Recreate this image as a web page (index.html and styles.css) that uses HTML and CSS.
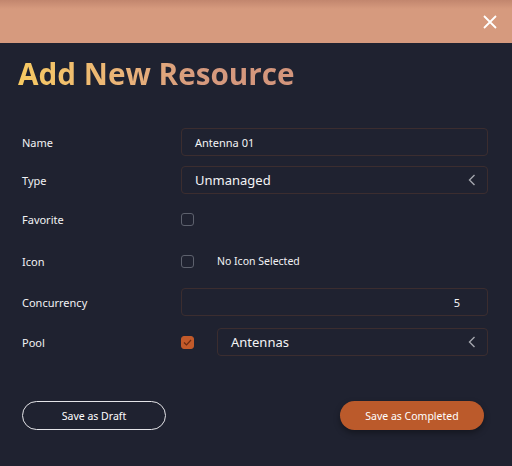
FILE: index.html
```html
<!DOCTYPE html>
<html lang="en">
<head>
  <meta charset="UTF-8" />
  <title>Add New Resource</title>
  <link rel="stylesheet" href="styles.css">
</head>
<body>
  <div class="dialog">
    <div class="dialog-top">
      <button class="close-btn" aria-label="Close">
        <svg width="14" height="14" viewBox="0 0 14 14"><path d="M1 1 L13 13 M13 1 L1 13" stroke="#fff" stroke-width="1.8" fill="none"/></svg>
      </button>
    </div>

    <h1 class="title">Add New Resource</h1>

    <div class="form">
      <div class="row">
        <label>Name</label>
        <div class="field"><span class="value">Antenna 01</span></div>
      </div>

      <div class="row">
        <label>Type</label>
        <div class="field select">
          <span class="value big">Unmanaged</span>
          <svg class="chev" width="8" height="12" viewBox="0 0 8 12"><polyline points="6.5,1 1.5,6 6.5,11" stroke="#a4a6ad" stroke-width="1.4" fill="none"/></svg>
        </div>
      </div>

      <div class="row check-row">
        <label>Favorite</label>
        <span class="checkbox"></span>
      </div>

      <div class="row check-row">
        <label>Icon</label>
        <span class="checkbox"></span>
        <span class="note">No Icon Selected</span>
      </div>

      <div class="row wide-gap">
        <label>Concurrency</label>
        <div class="field number"><span class="value">5</span></div>
      </div>

      <div class="row">
        <label>Pool</label>
        <span class="checkbox checked">
          <svg width="9" height="7" viewBox="0 0 9 7"><polyline points="1,3.5 3.5,6 8,1" stroke="#6b2a12" stroke-width="1.2" fill="none"/></svg>
        </span>
        <div class="field select pool">
          <span class="value big">Antennas</span>
          <svg class="chev" width="8" height="12" viewBox="0 0 8 12"><polyline points="6.5,1 1.5,6 6.5,11" stroke="#a4a6ad" stroke-width="1.4" fill="none"/></svg>
        </div>
      </div>
    </div>

    <div class="actions">
      <button class="btn-draft">Save as Draft</button>
      <button class="btn-complete">Save as Completed</button>
    </div>
  </div>
</body>
</html>
```

FILE: styles.css
```css
* {
  margin: 0;
  padding: 0;
  box-sizing: border-box;
}

body {
  font-family: 'Noto Sans', 'Open Sans', sans-serif;
  background: #1f2230;
  color: #fff;
  width: 512px;
  height: 466px;
  overflow: hidden;
}

.dialog-top {
  height: 43px;
  background: linear-gradient(180deg, #c2866e 0px, #d69a7e 9px, #d69a7e 100%);
  display: flex;
  justify-content: flex-end;
  align-items: center;
  padding-right: 15px;
}

.close-btn {
  background: none;
  border: none;
  display: flex;
  cursor: pointer;
}

.title {
  margin: 13px 0 0 18px;
  font-family: 'Open Sans', sans-serif;
  font-size: 29.7px;
  font-weight: 700;
  line-height: 36px;
  display: inline-block;
  background: linear-gradient(90deg, #f7ca62 0%, #e9b27a 40%, #d69a7e 65%, #d3957c 100%);
  -webkit-background-clip: text;
  background-clip: text;
  color: transparent;
}

.form {
  padding: 36px 24px 0 22px;
}

.row {
  display: flex;
  align-items: center;
  height: 28px;
  margin-bottom: 10px;
}

.row.check-row {
  height: 30px;
  margin-bottom: 12px;
}

.row.wide-gap {
  margin-bottom: 12px;
}

.row label {
  width: 159px;
  font-size: 11px;
  color: #f2f2f4;
}

.field {
  flex: 1;
  height: 28px;
  border: 1px solid #3b2d2f;
  border-radius: 4px;
  display: flex;
  align-items: center;
  padding: 0 13px;
}

.value {
  font-size: 11px;
  color: #f4f4f6;
}

.value.big {
  font-size: 13px;
}

.select {
  justify-content: space-between;
  padding-right: 11px;
}

.number {
  justify-content: flex-end;
  padding-right: 27px;
}

.pool {
  margin-left: 23px;
}

.checkbox {
  width: 13px;
  height: 13px;
  border: 1.5px solid #5d616d;
  border-radius: 3px;
  display: flex;
  align-items: center;
  justify-content: center;
}

.checkbox.checked {
  background: #c25a2a;
  border-color: #c25a2a;
}

.note {
  margin-left: 23px;
  font-size: 10.5px;
  color: #f2f2f4;
}

.actions {
  display: flex;
  justify-content: space-between;
  padding: 35px 28px 0 22px;
}

.actions button {
  width: 144px;
  height: 29px;
  border-radius: 15px;
  font-family: 'Noto Sans', sans-serif;
  font-size: 10.5px;
  color: #fff;
  cursor: pointer;
}

.btn-draft {
  background: transparent;
  border: 1px solid #e4e4e8;
}

.btn-complete {
  background: #bb5a2b;
  border: none;
  box-shadow: 0 3px 6px rgba(0, 0, 0, 0.35);
}
```
